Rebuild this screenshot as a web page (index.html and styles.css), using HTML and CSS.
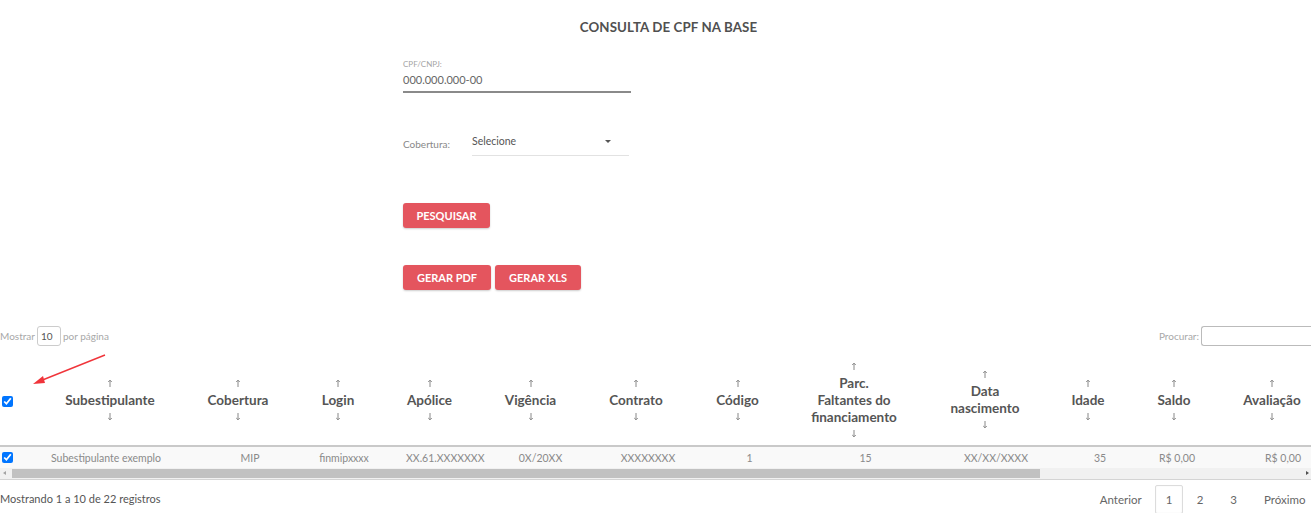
FILE: index.html
```html
<html>
  <head>
    <meta charset="utf-8">
    <link rel="stylesheet" href="styles.css">
  </head>
  <body>
    <svg class="defs" width="0" height="0">
      <symbol id="up" viewBox="0 0 6 8">
        <path d="M3 8V1.2M1.2 3L3 1.2L4.8 3" fill="none" stroke="#7a7a7a" stroke-width="0.9"/>
      </symbol>
      <symbol id="down" viewBox="0 0 6 8">
        <path d="M3 0V6.8M1.2 5L3 6.8L4.8 5" fill="none" stroke="#7a7a7a" stroke-width="0.9"/>
      </symbol>
    </svg>

    <div class="panel">
      <h1 class="title">CONSULTA DE CPF NA BASE</h1>
      <div class="field">
        <div class="fieldLabel">CPF/CNPJ:</div>
        <div class="fieldInput">000.000.000-00</div>
      </div>
      <div class="selectRow">
        <div class="selectLabel">Cobertura:</div>
        <div class="select">
          <span>Selecione</span>
          <span class="caret"></span>
        </div>
      </div>
      <div class="actions first">
        <a class="btn search">PESQUISAR</a>
      </div>
      <div class="actions">
        <a class="btn pdf">GERAR PDF</a>
        <a class="btn xls">GERAR XLS</a>
      </div>
    </div>

    <div class="toolbar">
      <div class="length">Mostrar <span class="lengthBox">10</span> por página</div>
      <div class="filter">Procurar: <span class="filterBox"></span></div>
    </div>

    <div class="tableWrap">
      <table class="grid">
        <colgroup>
          <col style="width:34px">
          <col style="width:144px">
          <col style="width:118px">
          <col style="width:96px">
          <col style="width:99px">
          <col style="width:103px">
          <col style="width:104px">
          <col style="width:109px">
          <col style="width:123px">
          <col style="width:118px">
          <col style="width:90px">
          <col style="width:92px">
          <col style="width:106px">
        </colgroup>
        <thead>
          <tr>
            <th class="check"><input type="checkbox" checked></th>
            <th><svg class="sort"><use href="#up"/></svg>Subestipulante<svg class="sort"><use href="#down"/></svg></th>
            <th><svg class="sort"><use href="#up"/></svg>Cobertura<svg class="sort"><use href="#down"/></svg></th>
            <th><svg class="sort"><use href="#up"/></svg>Login<svg class="sort"><use href="#down"/></svg></th>
            <th><svg class="sort"><use href="#up"/></svg>Apólice<svg class="sort"><use href="#down"/></svg></th>
            <th><svg class="sort"><use href="#up"/></svg>Vigência<svg class="sort"><use href="#down"/></svg></th>
            <th><svg class="sort"><use href="#up"/></svg>Contrato<svg class="sort"><use href="#down"/></svg></th>
            <th><svg class="sort"><use href="#up"/></svg>Código<svg class="sort"><use href="#down"/></svg></th>
            <th><svg class="sort"><use href="#up"/></svg>Parc.<br>Faltantes do<br>financiamento<svg class="sort"><use href="#down"/></svg></th>
            <th><svg class="sort"><use href="#up"/></svg>Data<br>nascimento<svg class="sort"><use href="#down"/></svg></th>
            <th><svg class="sort"><use href="#up"/></svg>Idade<svg class="sort"><use href="#down"/></svg></th>
            <th><svg class="sort"><use href="#up"/></svg>Saldo<svg class="sort"><use href="#down"/></svg></th>
            <th><svg class="sort"><use href="#up"/></svg>Avaliação<svg class="sort"><use href="#down"/></svg></th>
          </tr>
        </thead>
        <tbody>
          <tr>
            <td class="check"><input type="checkbox" checked></td>
            <td>Subestipulante exemplo</td>
            <td>MIP</td>
            <td>finmipxxxx</td>
            <td>XX.61.XXXXXXX</td>
            <td>0X/20XX</td>
            <td>XXXXXXXX</td>
            <td>1</td>
            <td>15</td>
            <td>XX/XX/XXXX</td>
            <td>35</td>
            <td>R$ 0,00</td>
            <td>R$ 0,00</td>
          </tr>
        </tbody>
      </table>
      <div class="scrollbar">
        <span class="arrowLeft"></span>
        <span class="thumb"></span>
        <span class="arrowRight"></span>
      </div>
    </div>

    <div class="footer">
      <div class="info">Mostrando 1 a 10 de 22 registros</div>
      <ul class="pager">
        <li>Anterior</li>
        <li class="current">1</li>
        <li>2</li>
        <li>3</li>
        <li>Próximo</li>
      </ul>
    </div>

    <svg class="pointer" width="120" height="40" viewBox="0 0 120 40">
      <line x1="105" y1="3" x2="40" y2="29" stroke="#f0343a" stroke-width="1.5"/>
      <polygon points="33,32 43,24 45,31" fill="#f0343a"/>
    </svg>
  </body>
</html>
```

FILE: styles.css
```css
body {
  margin: 0;
  font-family: Lato, "Open Sans", sans-serif;
  color: #555;
  background: white;
  overflow: hidden;
}

.defs {
  position: absolute;
}

.panel {
  margin-left: 403px;
  width: 531px;
  padding-top: 20px;
}

.title {
  margin: 0;
  font-size: 13.3px;
  line-height: 15px;
  font-weight: bold;
  text-align: center;
  color: #505050;
  letter-spacing: 0.1px;
}

.field {
  margin-top: 24px;
  width: 228px;
}

.fieldLabel {
  font-size: 8px;
  line-height: 10px;
  color: #a5a5a5;
}

.fieldInput {
  margin-top: 3px;
  height: 16px;
  line-height: 16px;
  font-size: 11px;
  color: #666;
  padding-bottom: 3px;
  border-bottom: solid 2px #8a8a8a;
}

.selectRow {
  display: flex;
  margin-top: 41px;
}

.selectLabel {
  width: 69px;
  padding-top: 3px;
  font-size: 10px;
  line-height: 14px;
  color: #888;
}

.select {
  display: flex;
  justify-content: space-between;
  width: 157px;
  height: 21px;
  font-size: 10.5px;
  line-height: 14px;
  color: #555;
  border-bottom: solid 1px #e2e2e2;
}

.caret {
  margin: 6px 18px 0 0;
  width: 0;
  height: 0;
  border-left: solid 3px transparent;
  border-right: solid 3px transparent;
  border-top: solid 3px #555;
}

.actions {
  display: flex;
  gap: 4px;
  margin-top: 37px;
}

.actions.first {
  margin-top: 47px;
}

.btn {
  display: block;
  height: 25px;
  line-height: 25px;
  font-size: 11px;
  font-weight: bold;
  color: white;
  text-align: center;
  background-color: #e4555e;
  border-radius: 3px;
  box-shadow: 0 1px 2px rgba(0, 0, 0, 0.2);
}

.search { width: 87px; }
.pdf { width: 88px; }
.xls { width: 86px; }

.toolbar {
  display: flex;
  justify-content: space-between;
  align-items: center;
  margin-top: 36px;
  height: 20px;
  font-size: 10px;
  color: #a8a8a8;
}

.length {
  display: flex;
  align-items: center;
  gap: 2px;
}

.lengthBox {
  display: inline-block;
  box-sizing: border-box;
  width: 24px;
  height: 20px;
  line-height: 18px;
  padding-left: 3px;
  color: #555;
  border: solid 1px #ccc;
  border-radius: 3px;
}

.filter {
  display: flex;
  align-items: center;
  gap: 2px;
}

.filterBox {
  display: inline-block;
  box-sizing: border-box;
  width: 110px;
  height: 20px;
  border: solid 1px #bbb;
  border-radius: 3px 0 0 3px;
  border-right: none;
}

.tableWrap {
  margin-top: 11px;
  width: 100%;
  overflow: hidden;
  border-bottom: solid 1px #d4d4d4;
}

.grid {
  table-layout: fixed;
  width: 1336px;
  border-collapse: collapse;
}

.grid th {
  height: 89px;
  padding: 0 16px 2px 16px;
  font-size: 13.5px;
  line-height: 17px;
  font-weight: bold;
  color: #555;
  text-align: center;
  vertical-align: middle;
  border-bottom: solid 2px #c9c9c9;
}

.grid th:nth-child(2)  { padding-left: 20px; padding-right: 12px; }
.grid th:nth-child(3)  { padding-left: 17px; padding-right: 15px; }
.grid th:nth-child(4)  { padding-left: 10px; padding-right: 22px; }
.grid th:nth-child(5)  { padding-left: 4px;  padding-right: 28px; }
.grid th:nth-child(6)  { padding-left: 4px;  padding-right: 28px; }
.grid th:nth-child(7)  { padding-left: 6px;  padding-right: 26px; }
.grid th:nth-child(8)  { padding-left: 1px;  padding-right: 31px; }
.grid th:nth-child(9)  { padding-left: 1px;  padding-right: 30px; }
.grid th:nth-child(10) { padding-left: 12px; padding-right: 20px; }
.grid th:nth-child(11) { padding-left: 11px; padding-right: 21px; }
.grid th:nth-child(12) { padding-left: 6px;  padding-right: 26px; }
.grid th:nth-child(13) { padding-left: 5px;  padding-right: 27px; }

.grid th.check,
.grid td.check {
  padding: 0 0 0 2px;
  text-align: left;
}

.check input {
  margin: 0;
  width: 11px;
  height: 11px;
  display: block;
}

.sort {
  display: block;
  width: 6px;
  height: 8px;
  margin: 4px auto 5px;
}

.grid td {
  height: 22px;
  padding: 0 14px;
  font-size: 10.5px;
  color: #8a8a8a;
  text-align: center;
  background-color: #f9f9f9;
  white-space: nowrap;
}

.grid td:nth-child(3)  { padding-left: 27px; padding-right: 1px; }
.grid td:nth-child(6)  { padding-left: 12px; padding-right: 16px; }
.grid td:nth-child(7)  { padding-left: 16px; padding-right: 12px; }
.grid td:nth-child(8)  { padding-left: 11px; padding-right: 17px; }
.grid td:nth-child(9)  { padding-left: 11px; padding-right: 17px; }
.grid td:nth-child(10) { padding-left: 21px; padding-right: 7px; }
.grid td:nth-child(11) { padding-left: 21px; padding-right: 7px; }
.grid td:nth-child(12) { padding-left: 7px;  padding-right: 21px; }

.scrollbar {
  position: relative;
  display: flex;
  align-items: center;
  height: 11px;
  background-color: #f1f1f1;
}

.thumb {
  display: block;
  margin-left: 12px;
  width: 1028px;
  height: 9px;
  background-color: #c1c1c1;
}

.arrowLeft,
.arrowRight {
  position: absolute;
  top: 3px;
  width: 0;
  height: 0;
  border-top: solid 2.5px transparent;
  border-bottom: solid 2.5px transparent;
}

.arrowLeft {
  left: 3px;
  border-right: solid 3px #a3a3a3;
}

.arrowRight {
  right: 2px;
  border-left: solid 3px #505050;
}

.footer {
  display: flex;
  justify-content: space-between;
  align-items: flex-start;
  margin-top: 5px;
}

.info {
  padding-top: 6px;
  font-size: 11px;
  line-height: 16px;
  color: #555;
}

.pager {
  display: flex;
  margin: 0 -8px 0 0;
  padding: 0;
  list-style: none;
  font-size: 11.5px;
  color: #666;
}

.pager li {
  height: 27px;
  line-height: 27px;
  padding: 0 12.5px;
  border: solid 1px transparent;
}

.pager li.current {
  width: 26px;
  padding: 0;
  text-align: center;
  border-color: #dcdcdc;
  border-radius: 2px;
  box-shadow: inset 0 0 2px rgba(0, 0, 0, 0.05);
}

.pointer {
  position: absolute;
  left: 0;
  top: 352px;
}
```
